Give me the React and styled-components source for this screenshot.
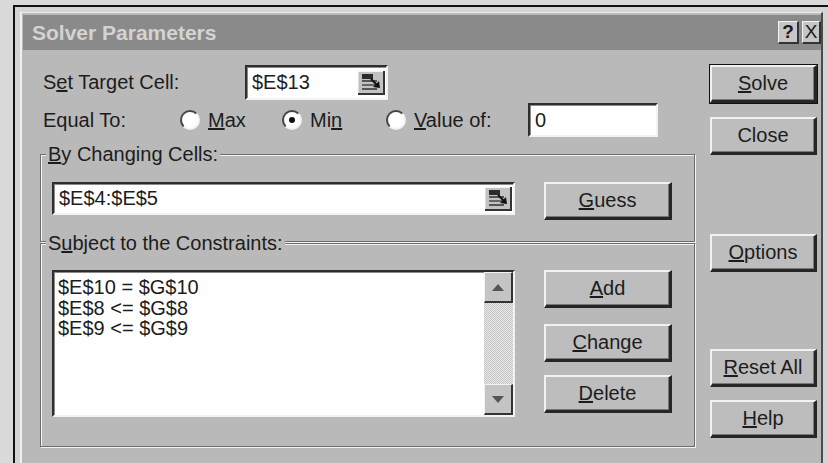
import styled, { createGlobalStyle } from "styled-components";

const GlobalStyle = createGlobalStyle`
  html, body {
    margin: 0;
    padding: 0;
    background: #dadada;
  }
  body {
    font-family: "Liberation Sans", Arial, sans-serif;
    overflow: hidden;
  }
`;

const FACE = "#b9b9b9";

const Page = styled.div`
  height: 463px;
  box-sizing: border-box;
  padding: 5px 0 0 13px;
  background: #dadada;
  display: flex;
`;

const Frame = styled.div`
  flex: 1;
  display: flex;
  overflow: hidden;
  border-top: 2px solid #111;
  border-left: 2px solid #111;
  background: #d4d4d4;
  padding: 5px 0 0 5px;
`;

const Dialog = styled.div`
  width: 803px;
  flex-shrink: 0;
  box-sizing: border-box;
  display: flex;
  flex-direction: column;
  background: ${FACE};
  border-top: 1px solid #ececec;
  border-left: 2px solid #efefef;
  border-right: 2px solid #4b4b4b;
  padding: 2px 0 0 1px;
`;

const TitleBar = styled.div`
  height: 35px;
  display: flex;
  align-items: center;
  padding-left: 9px;
  background: #8a8a8a;
  color: #d3d3d3;
  font-size: 21px;
  font-weight: bold;
`;

const TitleButtons = styled.div`
  margin-left: auto;
  display: flex;
  gap: 3px;
`;

const TitleButton = styled.div`
  width: ${(p) => p.$w}px;
  height: 23px;
  box-sizing: border-box;
  display: flex;
  align-items: center;
  justify-content: center;
  background: #c6c6c6;
  border-top: 1px solid #f2f2f2;
  border-left: 1px solid #f2f2f2;
  border-right: 2px solid #333;
  border-bottom: 2px solid #333;
  color: #1a1a1a;
  font-size: 19px;
  font-weight: ${(p) => (p.$bold ? "bold" : "normal")};
`;

const Body = styled.div`
  display: flex;
  gap: 15px;
  padding: 15px 4px 0 17px;
  color: #1c1c1c;
  font-size: 20px;
`;

const LeftCol = styled.div`
  width: 655px;
  display: flex;
  flex-direction: column;
`;

const Row = styled.div`
  display: flex;
  align-items: ${(p) => p.$align || "center"};
  height: ${(p) => (p.$h ? `${p.$h}px` : "auto")};
  margin-top: ${(p) => p.$mt || 0}px;
  gap: ${(p) => p.$gap || 0}px;
`;

const FieldLabel = styled.div`
  width: ${(p) => p.$w}px;
  box-sizing: border-box;
  padding-left: 3px;
  flex-shrink: 0;
`;

const TextBox = styled.div`
  width: ${(p) => p.$w}px;
  height: ${(p) => p.$h}px;
  box-sizing: border-box;
  display: flex;
  align-items: center;
  padding-left: 5px;
  background: #fff;
  border-style: solid;
  border-width: 2px;
  border-color: #2e2e2e #f3f3f3 #f3f3f3 #2e2e2e;
  box-shadow: inset 1px 1px 0 #8a8a8a;
  flex-shrink: 0;
`;

const RefButton = styled.svg`
  margin-left: auto;
  margin-right: 1px;
  flex-shrink: 0;
`;

const RadioItem = styled.label`
  width: ${(p) => p.$w}px;
  display: flex;
  align-items: center;
  gap: 8px;
  flex-shrink: 0;
`;

const RadioDot = styled.span`
  width: 20px;
  height: 20px;
  box-sizing: border-box;
  border-radius: 50%;
  background: #fff;
  border: 2px solid;
  border-color: #444 #f2f2f2 #f2f2f2 #444;
  display: grid;
  place-items: center;
  &::after {
    content: "";
    width: 6px;
    height: 6px;
    border-radius: 50%;
    background: ${(p) => (p.$on ? "#111" : "transparent")};
  }
`;

const Group = styled.div`
  margin-top: ${(p) => p.$mt}px;
  border: 1px solid #6c6c6c;
  box-shadow: inset 1px 1px 0 #f3f3f3, 1px 1px 0 #f3f3f3;
  padding: 0 0 ${(p) => p.$pb}px 11px;
`;

const Legend = styled.div`
  display: table;
  margin: -12px 0 0 -6px;
  padding: 0 2px;
  line-height: 22px;
  background: ${FACE};
`;

const ListBox = styled.div`
  width: 463px;
  height: 147px;
  box-sizing: border-box;
  display: flex;
  background: #fff;
  border-style: solid;
  border-width: 2px;
  border-color: #2e2e2e #f3f3f3 #f3f3f3 #2e2e2e;
  box-shadow: inset 1px 1px 0 #8a8a8a;
  flex-shrink: 0;
`;

const ListItems = styled.div`
  flex: 1;
  padding: 5px 0 0 4px;
  line-height: 20.5px;
`;

const ScrollBar = styled.div`
  width: 29px;
  display: flex;
  flex-direction: column;
  background: repeating-conic-gradient(#ececec 0 25%, #c2c2c2 0 50%) 0 0 / 2px 2px;
`;

const ScrollButton = styled.div`
  height: 31px;
  box-sizing: border-box;
  display: grid;
  place-items: center;
  background: #c4c4c4;
  border-top: 1px solid #f2f2f2;
  border-left: 1px solid #f2f2f2;
  border-right: 2px solid #333;
  border-bottom: 2px solid #333;
  margin-top: ${(p) => (p.$end ? "auto" : "0")};
`;

const ButtonStack = styled.div`
  display: flex;
  flex-direction: column;
  margin-left: 29px;
`;

const Button = styled.div`
  width: ${(p) => p.$w || 128}px;
  height: 38px;
  margin-top: ${(p) => p.$mt || 0}px;
  box-sizing: border-box;
  display: flex;
  align-items: center;
  justify-content: center;
  background: #bdbdbd;
  border-top: 2px solid #f1f1f1;
  border-left: 2px solid #f1f1f1;
  border-right: 3px solid #262626;
  border-bottom: 3px solid #262626;
  box-shadow: ${(p) =>
    p.$default ? "0 0 0 1px #111, inset -1px -1px 0 #777" : "inset -1px -1px 0 #777"};
  color: #1c1c1c;
  font-size: 20px;
  flex-shrink: 0;
`;

const RightCol = styled.div`
  width: 107px;
  display: flex;
  flex-direction: column;
`;

const RefIcon = () => (
  <RefButton width="27" height="24" viewBox="0 0 27 24">
    <rect x="0" y="0" width="27" height="24" fill="#c2c2c2" />
    <path d="M0 23.5V0.5H26" stroke="#f4f4f4" fill="none" />
    <path d="M0 23H26V0" stroke="#333" strokeWidth="2" fill="none" />
    <rect x="4" y="3" width="11" height="5" fill="#2b2b2b" />
    <rect x="4" y="9" width="15" height="2" fill="#555" />
    <rect x="4" y="13" width="15" height="2" fill="#666" />
    <rect x="4" y="17" width="15" height="2" fill="#555" />
    <path d="M13 8L20 15" stroke="#111" strokeWidth="2" />
    <path d="M22 17L15 16L21 10Z" fill="#111" />
  </RefButton>
);

const Arrow = ({ up }) => (
  <svg width="12" height="7" viewBox="0 0 12 7">
    <path d={up ? "M6 0L12 7H0Z" : "M0 0H12L6 7Z"} fill="#555" />
  </svg>
);

const constraints = ["$E$10 = $G$10", "$E$8 <= $G$8", "$E$9 <= $G$9"];

export default function App() {
  return (
    <>
      <GlobalStyle />
      <Page>
        <Frame>
          <Dialog>
            <TitleBar>
              Solver Parameters
              <TitleButtons>
                <TitleButton $w={21} $bold>?</TitleButton>
                <TitleButton $w={19}>X</TitleButton>
              </TitleButtons>
            </TitleBar>
            <Body>
              <LeftCol>
                <Row $h={35}>
                  <FieldLabel $w={205}>
                    S<u>e</u>t Target Cell:
                  </FieldLabel>
                  <TextBox $w={143} $h={35}>
                    $E$13
                    <RefIcon />
                  </TextBox>
                </Row>
                <Row $h={34} $mt={3}>
                  <FieldLabel $w={140}>Equal To:</FieldLabel>
                  <RadioItem $w={102}>
                    <RadioDot />
                    <span>
                      <u>M</u>ax
                    </span>
                  </RadioItem>
                  <RadioItem $w={104}>
                    <RadioDot $on />
                    <span>
                      Mi<u>n</u>
                    </span>
                  </RadioItem>
                  <RadioItem $w={142}>
                    <RadioDot />
                    <span>
                      <u>V</u>alue of:
                    </span>
                  </RadioItem>
                  <TextBox $w={130} $h={34}>
                    0
                  </TextBox>
                </Row>

                <Group $mt={17} $pb={21}>
                  <Legend>
                    <u>B</u>y Changing Cells:
                  </Legend>
                  <Row $mt={17} $align="flex-start">
                    <TextBox $w={463} $h={33}>
                      $E$4:$E$5
                      <RefIcon />
                    </TextBox>
                    <ButtonStack>
                      <Button>
                        <u>G</u>uess
                      </Button>
                    </ButtonStack>
                  </Row>
                </Group>

                <Group $mt={1} $pb={29}>
                  <Legend>
                    S<u>u</u>bject to the Constraints:
                  </Legend>
                  <Row $mt={16} $align="flex-start">
                    <ListBox>
                      <ListItems>
                        {constraints.map((c) => (
                          <div key={c}>{c}</div>
                        ))}
                      </ListItems>
                      <ScrollBar>
                        <ScrollButton>
                          <Arrow up />
                        </ScrollButton>
                        <ScrollButton $end>
                          <Arrow />
                        </ScrollButton>
                      </ScrollBar>
                    </ListBox>
                    <ButtonStack>
                      <Button>
                        <u>A</u>dd
                      </Button>
                      <Button $mt={16}>
                        <u>C</u>hange
                      </Button>
                      <Button $mt={13}>
                        <u>D</u>elete
                      </Button>
                    </ButtonStack>
                  </Row>
                </Group>
              </LeftCol>

              <RightCol>
                <Button $w={107} $default>
                  <u>S</u>olve
                </Button>
                <Button $w={107} $mt={14}>
                  Close
                </Button>
                <Button $w={107} $mt={79}>
                  <u>O</u>ptions
                </Button>
                <Button $w={107} $mt={77}>
                  <u>R</u>eset All
                </Button>
                <Button $w={107} $mt={13}>
                  <u>H</u>elp
                </Button>
              </RightCol>
            </Body>
          </Dialog>
        </Frame>
      </Page>
    </>
  );
}
